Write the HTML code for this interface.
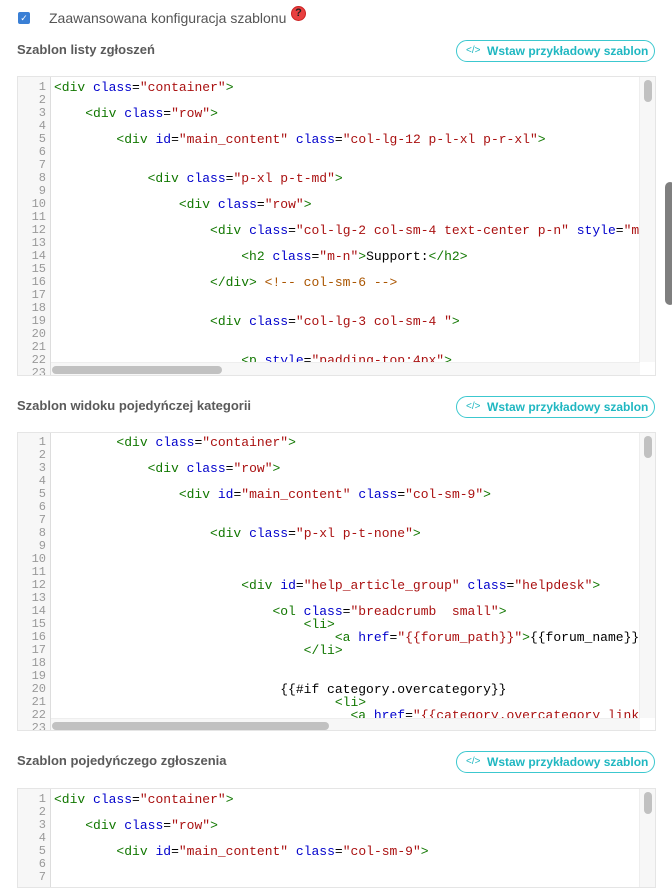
<!DOCTYPE html>
<html><head><meta charset="utf-8"><style>
*{margin:0;padding:0;box-sizing:border-box}
body{width:672px;height:869px;overflow:hidden;background:#fff;font-family:"Liberation Sans",sans-serif;position:relative}
.abs{position:absolute}
.h{position:absolute;left:17px;font-size:13px;font-weight:bold;color:#5a5a5a}
.btn{position:absolute;left:456px;width:199px;height:22px;border:1px solid #3cc8cf;border-radius:11px;color:#1fb7c1;font-size:12px;font-weight:bold;line-height:20px}
.btn i{position:absolute;left:9px;top:0;font-style:normal;font-weight:normal;font-size:10px;color:#1fb7c1}
.btn span{position:absolute;left:30px}
.ed{position:absolute;left:17px;width:639px;border:1px solid #e5e5e5;overflow:hidden;background:#fff}
.gut{position:absolute;left:0;top:0;bottom:0;width:33px;background:#f7f7f7;border-right:1px solid #ddd}
.ln{position:absolute;left:0;width:28px;text-align:right;font-family:"Liberation Mono",monospace;font-size:12px;color:#999;line-height:13px}
.cd{position:absolute;left:36px;font-family:"Liberation Mono",monospace;font-size:13px;line-height:13px;white-space:pre;color:#000}
.t{color:#170}.a{color:#00c}.s{color:#a11}.c{color:#a50}
.vs{position:absolute;right:0;top:0;width:16px;background:#f7f7f7;border-left:1px solid #eee}
.vt{position:absolute;left:4px;top:3px;width:8px;height:22px;border-radius:4px;background:#c1c1c1}
.hs{position:absolute;left:33px;height:13px;background:#f7f7f7;border-top:1px solid #eee}
.ht{position:absolute;top:3px;height:8px;border-radius:4px;background:#c1c1c1}
</style></head><body>

<div class="abs" style="left:18px;top:12px;width:12px;height:12px;border-radius:2px;background:#3a7fd5;color:#fff;font-size:9px;text-align:center;line-height:12px">✓</div>
<div class="abs" style="left:49px;top:10px;font-size:14px;color:#555">Zaawansowana konfiguracja szablonu</div>
<div class="abs" style="left:291px;top:6px;width:15px;height:15px;border-radius:50%;background:#e84040;color:#222;font-size:11px;font-weight:bold;text-align:center;line-height:13px;border:1px solid #c22">?</div>

<div class="h" style="top:42px">Szablon listy zgłoszeń</div>
<div class="btn" style="top:40px"><i>&lt;/&gt;</i><span>Wstaw przykładowy szablon</span></div>

<div class="ed" style="top:76px;height:300px">
<div class="gut"></div>
<div class="ln" style="top:4px">1<br>2<br>3<br>4<br>5<br>6<br>7<br>8<br>9<br>10<br>11<br>12<br>13<br>14<br>15<br>16<br>17<br>18<br>19<br>20<br>21<br>22<br>23</div>
<div class="cd" style="top:4px"><span class="t">&lt;div</span> <span class="a">class</span>=<span class="s">"container"</span><span class="t">&gt;</span>

    <span class="t">&lt;div</span> <span class="a">class</span>=<span class="s">"row"</span><span class="t">&gt;</span>

        <span class="t">&lt;div</span> <span class="a">id</span>=<span class="s">"main_content"</span> <span class="a">class</span>=<span class="s">"col-lg-12 p-l-xl p-r-xl"</span><span class="t">&gt;</span>


            <span class="t">&lt;div</span> <span class="a">class</span>=<span class="s">"p-xl p-t-md"</span><span class="t">&gt;</span>

                <span class="t">&lt;div</span> <span class="a">class</span>=<span class="s">"row"</span><span class="t">&gt;</span>

                    <span class="t">&lt;div</span> <span class="a">class</span>=<span class="s">"col-lg-2 col-sm-4 text-center p-n"</span> <span class="a">style</span>=<span class="s">"ma</span>

                        <span class="t">&lt;h2</span> <span class="a">class</span>=<span class="s">"m-n"</span><span class="t">&gt;</span>Support:<span class="t">&lt;/h2&gt;</span>

                    <span class="t">&lt;/div&gt;</span> <span class="c">&lt;!-- col-sm-6 --&gt;</span>


                    <span class="t">&lt;div</span> <span class="a">class</span>=<span class="s">"col-lg-3 col-sm-4 "</span><span class="t">&gt;</span>


                        <span class="t">&lt;p</span> <span class="a">style</span>=<span class="s">"padding-top:4px"</span><span class="t">&gt;</span></div>
<div class="vs" style="height:285px"><div class="vt"></div></div>
<div class="hs" style="top:285px;width:589px"><div class="ht" style="left:1px;width:170px"></div></div>
</div>

<div class="h" style="top:398px">Szablon widoku pojedyńczej kategorii</div>
<div class="btn" style="top:396px"><i>&lt;/&gt;</i><span>Wstaw przykładowy szablon</span></div>

<div class="ed" style="top:432px;height:299px">
<div class="gut"></div>
<div class="ln" style="top:3px">1<br>2<br>3<br>4<br>5<br>6<br>7<br>8<br>9<br>10<br>11<br>12<br>13<br>14<br>15<br>16<br>17<br>18<br>19<br>20<br>21<br>22<br>23</div>
<div class="cd" style="top:3px">        <span class="t">&lt;div</span> <span class="a">class</span>=<span class="s">"container"</span><span class="t">&gt;</span>

            <span class="t">&lt;div</span> <span class="a">class</span>=<span class="s">"row"</span><span class="t">&gt;</span>

                <span class="t">&lt;div</span> <span class="a">id</span>=<span class="s">"main_content"</span> <span class="a">class</span>=<span class="s">"col-sm-9"</span><span class="t">&gt;</span>


                    <span class="t">&lt;div</span> <span class="a">class</span>=<span class="s">"p-xl p-t-none"</span><span class="t">&gt;</span>



                        <span class="t">&lt;div</span> <span class="a">id</span>=<span class="s">"help_article_group"</span> <span class="a">class</span>=<span class="s">"helpdesk"</span><span class="t">&gt;</span>

                            <span class="t">&lt;ol</span> <span class="a">class</span>=<span class="s">"breadcrumb  small"</span><span class="t">&gt;</span>
                                <span class="t">&lt;li&gt;</span>
                                    <span class="t">&lt;a</span> <span class="a">href</span>=<span class="s">"{{forum_path}}"</span><span class="t">&gt;</span>{{forum_name}}<span class="t">&lt;</span>
                                <span class="t">&lt;/li&gt;</span>


                             {{#if category.overcategory}}
                                    <span class="t">&lt;li&gt;</span>
                                      <span class="t">&lt;a</span> <span class="a">href</span>=<span class="s">"{{category.overcategory_link</span></div>
<div class="vs" style="height:285px"><div class="vt"></div></div>
<div class="hs" style="top:285px;width:589px"><div class="ht" style="left:1px;width:277px"></div></div>
</div>

<div class="h" style="top:753px">Szablon pojedyńczego zgłoszenia</div>
<div class="btn" style="top:751px"><i>&lt;/&gt;</i><span>Wstaw przykładowy szablon</span></div>

<div class="ed" style="top:788px;height:100px">
<div class="gut"></div>
<div class="ln" style="top:4px">1<br>2<br>3<br>4<br>5<br>6<br>7</div>
<div class="cd" style="top:4px"><span class="t">&lt;div</span> <span class="a">class</span>=<span class="s">"container"</span><span class="t">&gt;</span>

    <span class="t">&lt;div</span> <span class="a">class</span>=<span class="s">"row"</span><span class="t">&gt;</span>

        <span class="t">&lt;div</span> <span class="a">id</span>=<span class="s">"main_content"</span> <span class="a">class</span>=<span class="s">"col-sm-9"</span><span class="t">&gt;</span></div>
<div class="vs" style="height:100px"><div class="vt"></div></div>
</div>

<div class="abs" style="left:665px;top:182px;width:10px;height:123px;border-radius:5px;background:#7f7f7f"></div>
</body></html>
